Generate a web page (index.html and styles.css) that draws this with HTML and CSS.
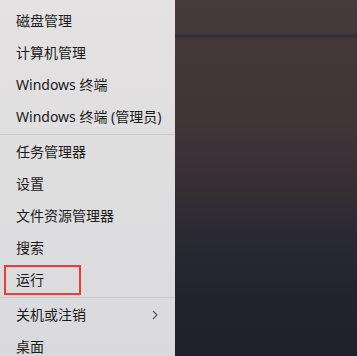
FILE: index.html
```html
<!DOCTYPE html>
<html lang="zh-CN">
<head>
<meta charset="utf-8">
<link rel="stylesheet" href="styles.css">
</head>
<body>
<div class="screen">
  <nav class="menu">
    <div class="item">磁盘管理</div>
    <div class="item">计算机管理</div>
    <div class="item">Windows 终端</div>
    <div class="item">Windows 终端 (管理员)</div>
    <div class="sep"></div>
    <div class="item">任务管理器</div>
    <div class="item">设置</div>
    <div class="item">文件资源管理器</div>
    <div class="item">搜索</div>
    <div class="item highlighted">运行<span class="mark"></span></div>
    <div class="sep"></div>
    <div class="item has-sub">关机或注销
      <svg class="chev" width="6" height="10" viewBox="0 0 6 10"><path d="M1 1 L5 5 L1 9" fill="none" stroke="#5a5a5e" stroke-width="1.2"/></svg>
    </div>
    <div class="item">桌面</div>
  </nav>
  <div class="desktop">
    <div class="band"></div>
  </div>
</div>
</body>
</html>
```
FILE: styles.css
```css
html, body {
  margin: 0;
  padding: 0;
  width: 357px;
  height: 356px;
  overflow: hidden;
}
.screen {
  display: flex;
  width: 357px;
  height: 356px;
  background: linear-gradient(180deg, #483b3e 0px, #463a3d 34px, #443739 40px, #413538 120px, #372f35 180px, #2b2a33 230px, #22232c 300px, #1f2029 356px);
  font-family: "Noto Sans", "Noto Sans CJK SC", sans-serif;
}
.menu {
  width: 175px;
  flex: none;
  padding-top: 5px;
  background: linear-gradient(180deg, #e4e2e3 0%, #dfdedf 50%, #dadadd 100%);
  display: flex;
  flex-direction: column;
}
.item {
  position: relative;
  height: 32px;
  line-height: 32px;
  padding-left: 16px;
  font-size: 14px;
  color: #1b1b1b;
  white-space: nowrap;
  flex: none;
}
.sep {
  height: 1px;
  margin: 1px 0 1px;
  background: #cbcacc;
  flex: none;
}
.mark {
  position: absolute;
  left: 4px;
  top: 1px;
  width: 73px;
  height: 26px;
  border: 2px solid #ef3b3b;
}
.chev {
  position: absolute;
  right: 17px;
  top: 11px;
}
.desktop {
  flex: 1;
  position: relative;
}
.band {
  position: absolute;
  left: 0;
  right: 0;
  top: 33px;
  height: 6px;
  background: linear-gradient(180deg, rgba(40,38,50,0) 0%, rgba(40,38,52,0.7) 50%, rgba(40,38,50,0) 100%);
}
```
